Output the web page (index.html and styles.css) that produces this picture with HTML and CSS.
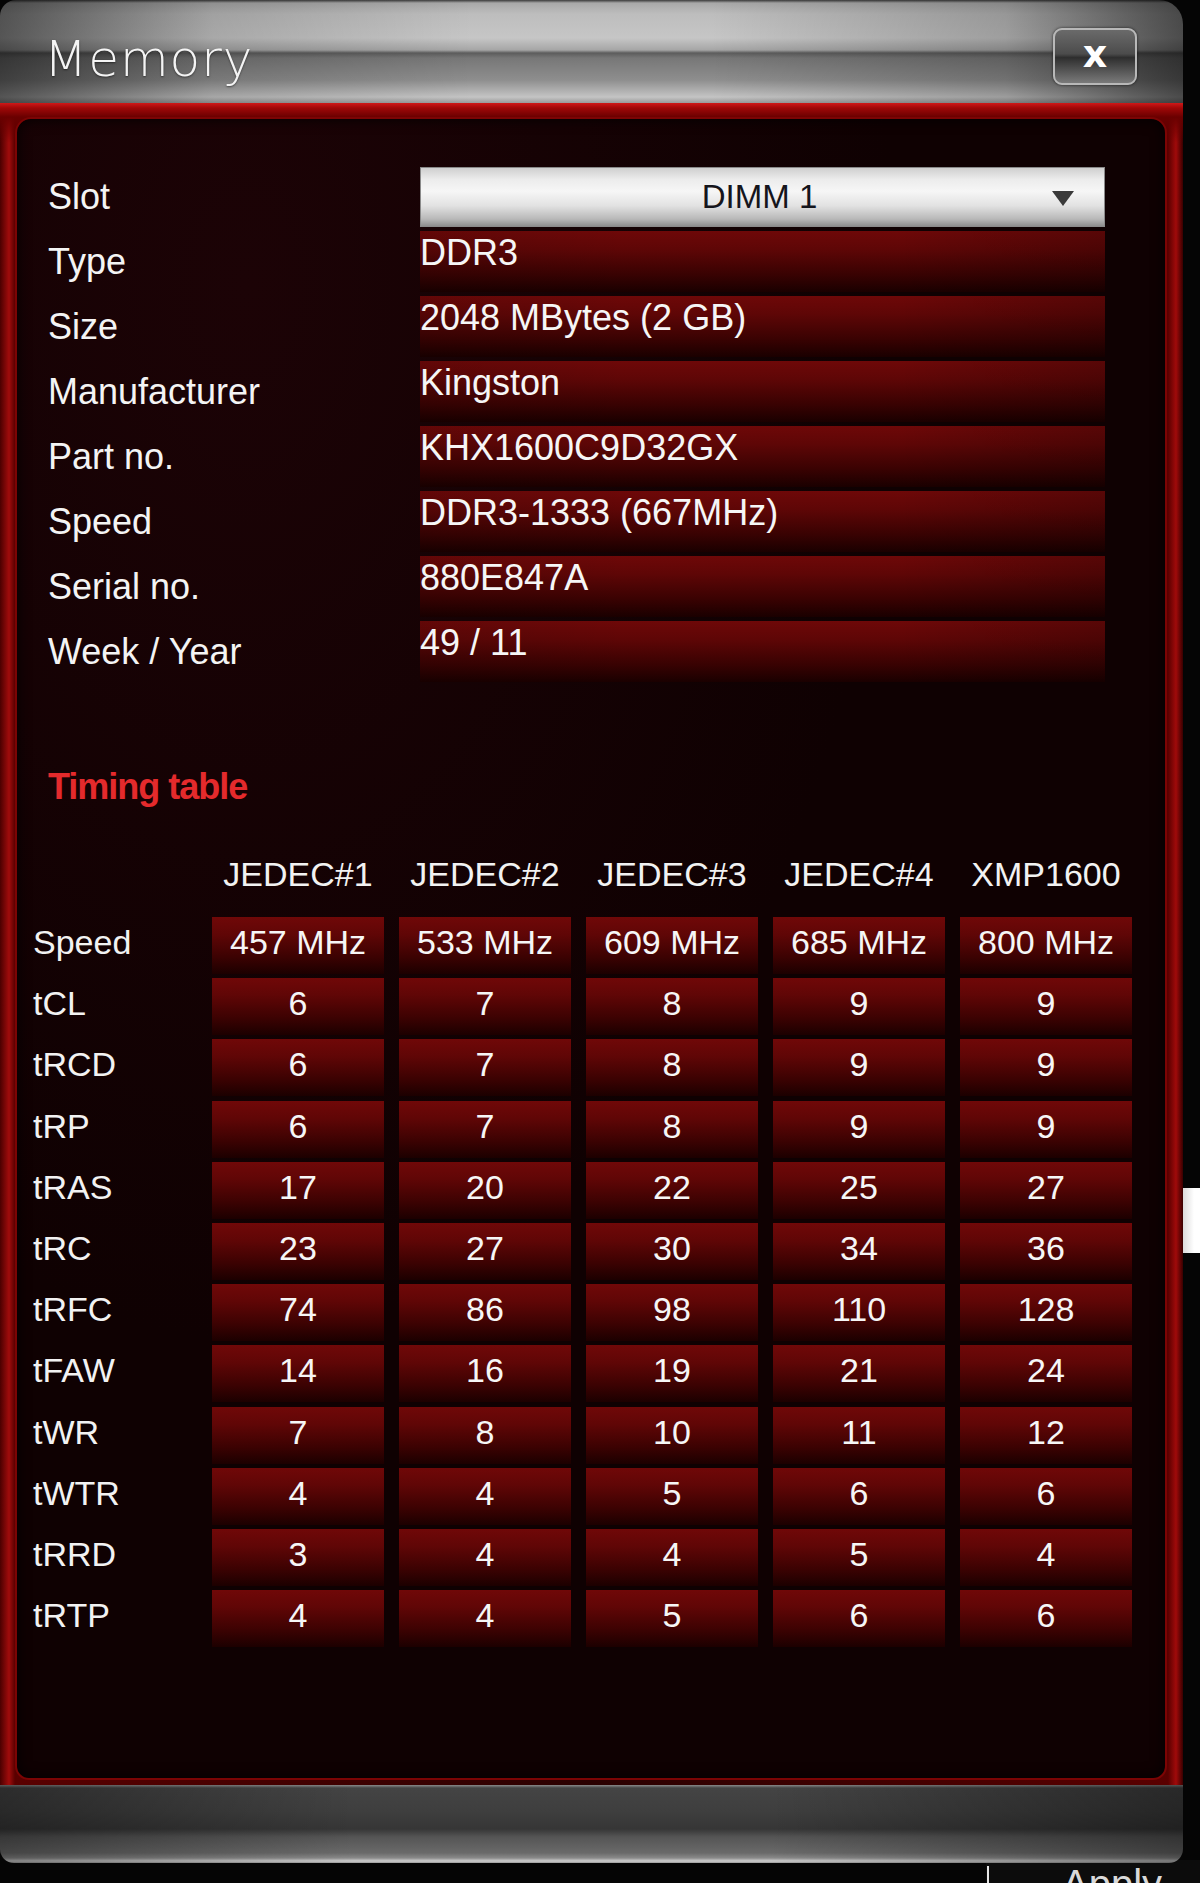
FILE: index.html
```html
<!DOCTYPE html>
<html lang="en">
<head>
<meta charset="utf-8">
<title>Memory</title>
<link rel="stylesheet" href="styles.css">
</head>
<body>
<div class="desk-box"></div>
<div class="desk-apply"><span class="apply-frame"></span><span class="apply-text">Apply</span></div>
<div class="window">
  <div class="titlebar">
    <span class="title">Memory</span>
    <span class="close">x</span>
  </div>
  <div class="frame">
    <div class="content">
      <div class="info">
        <div class="label">Slot</div>
        <div class="select"><span class="select-text">DIMM 1</span><span class="arrow"></span></div>
        <div class="label">Type</div><div class="value">DDR3</div>
        <div class="label">Size</div><div class="value">2048 MBytes (2 GB)</div>
        <div class="label">Manufacturer</div><div class="value">Kingston</div>
        <div class="label">Part no.</div><div class="value">KHX1600C9D32GX</div>
        <div class="label">Speed</div><div class="value">DDR3-1333 (667MHz)</div>
        <div class="label">Serial no.</div><div class="value">880E847A</div>
        <div class="label">Week / Year</div><div class="value">49 / 11</div>
      </div>
      <div class="timing-title">Timing table</div>
      <div class="thead">
        <div></div>
        <div class="th">JEDEC#1</div>
        <div class="th">JEDEC#2</div>
        <div class="th">JEDEC#3</div>
        <div class="th">JEDEC#4</div>
        <div class="th">XMP1600</div>
      </div>
      <div class="tbody">
        <div class="rl">Speed</div><div class="c">457 MHz</div><div class="c">533 MHz</div><div class="c">609 MHz</div><div class="c">685 MHz</div><div class="c">800 MHz</div>
        <div class="rl">tCL</div><div class="c">6</div><div class="c">7</div><div class="c">8</div><div class="c">9</div><div class="c">9</div>
        <div class="rl">tRCD</div><div class="c">6</div><div class="c">7</div><div class="c">8</div><div class="c">9</div><div class="c">9</div>
        <div class="rl">tRP</div><div class="c">6</div><div class="c">7</div><div class="c">8</div><div class="c">9</div><div class="c">9</div>
        <div class="rl">tRAS</div><div class="c">17</div><div class="c">20</div><div class="c">22</div><div class="c">25</div><div class="c">27</div>
        <div class="rl">tRC</div><div class="c">23</div><div class="c">27</div><div class="c">30</div><div class="c">34</div><div class="c">36</div>
        <div class="rl">tRFC</div><div class="c">74</div><div class="c">86</div><div class="c">98</div><div class="c">110</div><div class="c">128</div>
        <div class="rl">tFAW</div><div class="c">14</div><div class="c">16</div><div class="c">19</div><div class="c">21</div><div class="c">24</div>
        <div class="rl">tWR</div><div class="c">7</div><div class="c">8</div><div class="c">10</div><div class="c">11</div><div class="c">12</div>
        <div class="rl">tWTR</div><div class="c">4</div><div class="c">4</div><div class="c">5</div><div class="c">6</div><div class="c">6</div>
        <div class="rl">tRRD</div><div class="c">3</div><div class="c">4</div><div class="c">4</div><div class="c">5</div><div class="c">4</div>
        <div class="rl">tRTP</div><div class="c">4</div><div class="c">4</div><div class="c">5</div><div class="c">6</div><div class="c">6</div>
      </div>
    </div>
  </div>
  <div class="bottombar"></div>
</div>
</body>
</html>
```

FILE: styles.css
```css
html, body {
  margin: 0;
  padding: 0;
}
body {
  width: 1200px;
  height: 1883px;
  background: #050505;
  position: relative;
  overflow: hidden;
  font-family: "Liberation Sans", Arial, sans-serif;
  color: #f2f2f2;
}

/* desktop elements behind the window */
.desk-box {
  position: absolute;
  left: 1182px;
  top: 1188px;
  width: 30px;
  height: 65px;
  background: linear-gradient(to right, #d8d8d8, #ffffff 40%);
}
.desk-apply {
  position: absolute;
  left: 986px;
  top: 1860px;
  width: 214px;
  height: 23px;
  background: #0c0c0c;
}
.apply-frame {
  position: absolute;
  left: 1px;
  top: 6px;
  width: 2px;
  height: 20px;
  background: #e6e6e6;
}
.apply-text {
  position: absolute;
  left: 76px;
  top: 4px;
  font-size: 40px;
  line-height: 40px;
  color: #d9d9d9;
}

.window {
  position: relative;
  width: 1183px;
  display: flex;
  flex-direction: column;
}

.titlebar {
  height: 103px;
  display: flex;
  align-items: center;
  padding: 0 46px 0 44px;
  box-sizing: border-box;
  border-radius: 16px 24px 0 0;
  background:
    linear-gradient(to right, rgba(10,10,10,0.6) 0%, rgba(0,0,0,0.15) 18%, rgba(0,0,0,0) 40%, rgba(0,0,0,0) 60%, rgba(0,0,0,0.2) 85%, rgba(10,10,10,0.65) 100%),
    linear-gradient(to bottom, #3a3a3a 0px, #a8a8a8 3px, #bdbdbd 14px, #c6c6c6 38px, #a6a6a6 50px, #5c5c5c 53px, #777 58px, #8e8e8e 80px, #c4c4c4 97px, #9a9a9a 103px);
}
.title {
  font-family: "DejaVu Sans", "Liberation Sans", sans-serif;
  font-weight: 200;
  font-size: 50px;
  letter-spacing: 1px;
  color: #f4f4f4;
  text-shadow: 0 1px 2px rgba(0,0,0,0.5);
  margin-top: 14px;
}
.close {
  margin-left: auto;
  width: 84px;
  height: 57px;
  box-sizing: border-box;
  margin-top: 10px;
  border: 2px solid #b8b8b8;
  border-radius: 9px;
  display: flex;
  align-items: center;
  justify-content: center;
  font-family: "DejaVu Sans", sans-serif;
  font-weight: bold;
  font-size: 38px;
  line-height: 1;
  padding-bottom: 6px;
  color: #ffffff;
  background: linear-gradient(to bottom, #6a6a6a 0%, #4c4c4c 45%, #2e2e2e 52%, #7a7a7a 100%);
  box-shadow: 0 0 3px rgba(0,0,0,0.7);
}

.frame {
  padding: 14px 16px 5px 15px;
  background:
    linear-gradient(to bottom, #d01818 0px, #a00808 5px, #6a0000 14px, rgba(90,0,0,0) 40px),
    linear-gradient(to right, #4a0000 0px, #a00c0c 9px, #5a0000 15px, #2a0000 50%, #5a0000 1168px, #a00a0a 1176px, #3a0000 1183px);
}
.content {
  height: 1663px;
  box-sizing: border-box;
  border: 2px solid #7c0404;
  border-radius: 16px 16px 14px 14px;
  background:
    radial-gradient(ellipse at 20% 10%, #1c0306 0%, rgba(20,0,3,0) 50%),
    #0f0102;
  box-shadow: inset 0 0 14px rgba(0,0,0,0.9);
  padding: 48px 0 0 18px;
}

.info {
  display: grid;
  grid-template-columns: 372px 685px;
  grid-template-rows: 60px repeat(7, 61px);
  row-gap: 4px;
  padding-left: 13px;
}
.info .label {
  font-size: 36px;
  line-height: 44px;
  display: flex;
  align-items: center;
  color: #f4f4f4;
}
.select {
  height: 60px;
  margin-bottom: -3px;
  box-sizing: border-box;
  border: 1px solid #8a8a8a;
  background: linear-gradient(to bottom, #cfcfcf 0%, #ececec 20%, #f6f6f6 40%, #e2e2e2 65%, #b8b8b8 88%, #8e8e8e 100%);
  display: flex;
  align-items: center;
  justify-content: center;
  position: relative;
}
.select-text {
  font-size: 33px;
  color: #15151c;
  margin-left: -6px;
}
.arrow {
  position: absolute;
  right: 30px;
  top: 23px;
  width: 0;
  height: 0;
  border-left: 11px solid transparent;
  border-right: 11px solid transparent;
  border-top: 15px solid #3a3a3a;
}
.value {
  font-size: 36px;
  line-height: 44px;
  color: #f6f6f6;
  background:
    linear-gradient(to right, rgba(0,0,0,0.1), rgba(0,0,0,0) 30%, rgba(0,0,0,0) 70%, rgba(0,0,0,0.2)),
    linear-gradient(to bottom, #6e0808 0%, #5e0606 30%, #3a0202 70%, #1a0000 100%);
}

.timing-title {
  margin-top: 83px;
  margin-left: 13px;
  font-size: 36px;
  line-height: 44px;
  font-weight: bold;
  letter-spacing: -1px;
  color: #e42a2c;
}

.thead, .tbody {
  display: grid;
  grid-template-columns: 162px repeat(5, 172px);
  column-gap: 15px;
}
.thead {
  margin-top: 43px;
  height: 44px;
  margin-bottom: 21px;
}
.th {
  font-size: 34px;
  line-height: 44px;
  text-align: center;
  color: #f2f2f2;
}
.tbody {
  grid-auto-rows: 57px;
  row-gap: 4.2px;
}
.rl {
  font-size: 34px;
  line-height: 50px;
  color: #f2f2f2;
  margin-left: -2px;
}
.c {
  font-size: 34px;
  line-height: 50px;
  text-align: center;
  color: #f6f6f6;
  background: linear-gradient(to bottom, #700808 0%, #600606 30%, #3c0202 70%, #1c0000 100%);
}

.bottombar {
  height: 78px;
  border-radius: 0 0 14px 14px;
  background:
    linear-gradient(to right, rgba(0,0,0,0.35) 0%, rgba(0,0,0,0) 30%, rgba(0,0,0,0) 65%, rgba(0,0,0,0.4) 100%),
    linear-gradient(to bottom, #8a8a8a 0px, #444 3px, #3e3e3e 28px, #363636 44px, #555 52px, #6a6a6a 68px, #8a8a8a 73px, #d0d0d0 76px, #9a9a9a 78px);
}
```
